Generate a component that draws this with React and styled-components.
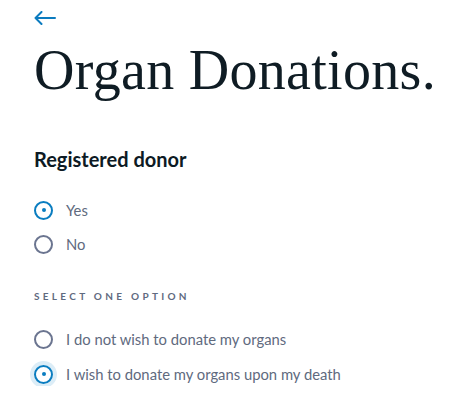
import React, { useState } from "react";
import styled, { createGlobalStyle } from "styled-components";

const Global = createGlobalStyle`
  html, body { margin: 0; padding: 0; background: #fff; }
  body { font-family: Lato, "Noto Sans", sans-serif; }
`;

const Page = styled.main`
  padding: 8px 0 0 34px;
  display: flex;
  flex-direction: column;
`;

const BackButton = styled.button`
  background: none;
  border: none;
  padding: 0;
  width: 24px;
  height: 20px;
  color: #0b7bbf;
  cursor: pointer;
  display: flex;
  align-items: center;
`;

const Title = styled.h1`
  font-family: "Liberation Serif", "DejaVu Serif", serif;
  font-weight: 400;
  font-size: 56px;
  line-height: 64px;
  color: #0f1c24;
  margin: 10px 0 0 0;
  letter-spacing: 0.3px;
  white-space: nowrap;
`;

const Heading = styled.h2`
  font-family: Lato, sans-serif;
  font-weight: 700;
  font-size: 20px;
  color: #0d1a24;
  margin: 45px 0 0 0;
  line-height: 24px;
`;

const Group = styled.div`
  display: flex;
  flex-direction: column;
  gap: ${(p) => p.$gap}px;
  margin-top: ${(p) => p.$mt}px;
`;

const Option = styled.label`
  display: flex;
  align-items: center;
  gap: 13px;
  font-family: Lato, sans-serif;
  font-size: 14.8px;
  color: #606a7e;
  height: 24px;
  cursor: pointer;
`;

const Circle = styled.span`
  box-sizing: border-box;
  width: 19px;
  height: 19px;
  border-radius: 50%;
  border: 2px solid ${(p) => (p.$checked ? "#0a7dc0" : "#6b7590")};
  display: flex;
  align-items: center;
  justify-content: center;
  box-shadow: ${(p) => (p.$focus ? "0 0 0 4px #dcedf7" : "none")};
  &::after {
    content: "";
    width: 4px;
    height: 4px;
    border-radius: 50%;
    background: #0a7dc0;
    display: ${(p) => (p.$checked ? "block" : "none")};
  }
`;

const HiddenInput = styled.input`
  position: absolute;
  opacity: 0;
  width: 0;
  height: 0;
`;

const Eyebrow = styled.div`
  font-family: Lato, sans-serif;
  font-weight: 700;
  font-size: 10px;
  letter-spacing: 3.3px;
  color: #5f6a80;
  margin-top: 34px;
  text-transform: uppercase;
`;

function Radio({ name, value, checked, focus, onChange, children }) {
  return (
    <Option>
      <HiddenInput type="radio" name={name} value={value} checked={checked} onChange={() => onChange(value)} />
      <Circle $checked={checked} $focus={focus} />
      {children}
    </Option>
  );
}

export default function App() {
  const [donor, setDonor] = useState("yes");
  const [opt, setOpt] = useState("donate");
  return (
    <>
      <Global />
      <Page>
        <BackButton aria-label="Back">
          <svg width="22" height="14" viewBox="0 0 22 14" fill="none" stroke="currentColor" strokeWidth="2" strokeLinecap="round" strokeLinejoin="round">
            <path d="M21 7H1.5M7.5 1L1.5 7l6 6" />
          </svg>
        </BackButton>
        <Title>Organ Donations.</Title>
        <Heading>Registered donor</Heading>
        <Group $mt={27} $gap={10}>
          <Radio name="donor" value="yes" checked={donor === "yes"} onChange={setDonor}>Yes</Radio>
          <Radio name="donor" value="no" checked={donor === "no"} onChange={setDonor}>No</Radio>
        </Group>
        <Eyebrow>Select one option</Eyebrow>
        <Group $mt={25} $gap={11}>
          <Radio name="opt" value="no" checked={opt === "no"} onChange={setOpt}>I do not wish to donate my organs</Radio>
          <Radio name="opt" value="donate" checked={opt === "donate"} focus onChange={setOpt}>I wish to donate my organs upon my death</Radio>
        </Group>
      </Page>
    </>
  );
}
